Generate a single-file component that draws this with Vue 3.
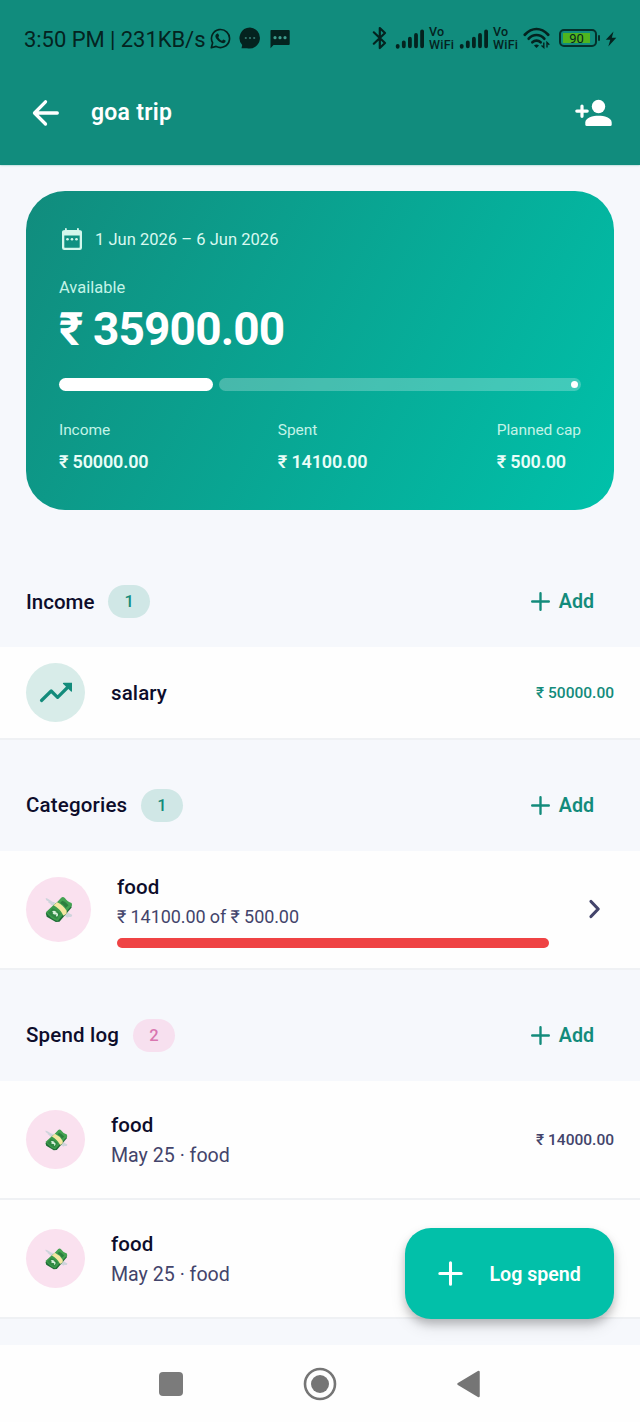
<script setup>
const stats = [
  { label: 'Income', value: '₹ 50000.00' },
  { label: 'Spent', value: '₹ 14100.00' },
  { label: 'Planned cap', value: '₹ 500.00' },
]
const spends = [
  { id: 1, name: 'food', meta: 'May 25 · food', amount: '₹ 14000.00' },
  { id: 2, name: 'food', meta: 'May 25 · food', amount: '' },
]
const spentPercent = 28.2
</script>

<template>
  <div class="screen">
    <svg class="defs" width="0" height="0" aria-hidden="true">
      <symbol id="money" viewBox="0 0 32 32">
        <path d="M12 9 C8 9 7 6 2 4.500 C1.500 7 4 8 5 8.200 C4 9 5.500 10.500 7 10.500 C7 12 9 13 11 12.500 Z" fill="#cfd4dc" />
        <path d="M21 18 C24 18 26 21 31 23 C31.500 25.500 29 26 27.500 25 C27 26.500 24.500 26 24 24.500 C22 25 20 23 19 21 Z" fill="#cfd4dc" />
        <path d="M2 21.500 L20 4.500 L30 12 L30.500 15 L17 30.500 L13 31 L3 25 Z" fill="#1d6b35" />
        <path d="M2 20 L13 10 L24 19.500 L15 30 Q7 27 2 20 Z" fill="#3b9a4b" />
        <path d="M13.500 10 L19 4 Q21 2.500 23 4.500 Q26 9 30.500 10 L31 12.500 L24 20 Z" fill="#43a252" />
        <path d="M20 7.500 Q23 8 27 12.500 L24 15.500 Q22 12 18 10 Z" fill="#2c7f3f" />
        <path d="M4.500 20.500 Q8 18 9 16 Q14 17 18.500 22 Q15 24 14.500 27.500 Q9 26 4.500 20.500 Z" fill="#2f8843" />
        <path d="M10.500 12.500 L14.500 9 Q21 12 25 18.500 L25 21.500 L21.500 24 Q18 16.500 10.500 12.500 Z" fill="#f5e6a1" />
        <path d="M9.500 20 Q11 18.800 12.500 20 L11 21.500 Q12.500 22 14 21.500 Q15.500 23 13.500 24.500" fill="none" stroke="#d9f2dc" stroke-width="1.700" />
      </symbol>
      <symbol id="plus" viewBox="0 0 24 24">
        <path d="M12 2.500 V21.500 M2.500 12 H21.500" fill="none" stroke="currentColor" stroke-width="2.700" stroke-linecap="round" />
      </symbol>
      <symbol id="bars" viewBox="0 0 30 20">
        <path d="M2.700 17.800 V16.800 M8.800 17.300 V13.300 M14.900 17.300 V9.700 M21 17.300 V6 M27.100 17.300 V2.300" fill="none" stroke="currentColor" stroke-width="3.800" stroke-linecap="round" />
      </symbol>
    </svg>

    <header class="top">
      <div class="status">
        <span class="clock">3:50 PM | 231KB/s</span>
        <svg class="s-wa" viewBox="0 0 24 24" width="21" height="21">
          <path d="M1.500 22.500 L3 17 A10.300 10.300 0 1 1 7 21 Z" fill="none" stroke="currentColor" stroke-width="1.900" stroke-linejoin="round" />
          <path d="M8.200 6.300 C9 6 9.400 6.300 9.700 7.200 L10.400 8.900 C10.500 9.300 9.600 10.200 9.500 10.500 C10.500 12.500 12 13.700 13.800 14.500 C14.200 14.200 15 13 15.400 13.100 L17.700 14.200 C18.100 14.500 17.700 16.200 16.700 16.900 C15.300 17.800 13.400 17.400 10.800 15.800 C8.700 14.400 7.200 12.500 6.400 10.700 C5.700 9 6.500 7 8.200 6.300 Z" fill="currentColor" />
        </svg>
        <svg class="s-chat" viewBox="0 0 22 22" width="22" height="22">
          <path d="M11 0.500 A10.500 10.500 0 1 1 8 21.200 H2.500 L3.200 18 A10.500 10.500 0 0 1 11 0.500 Z" fill="currentColor" />
          <g fill="#36796f"><circle cx="6.800" cy="11" r="1.100" /><circle cx="11" cy="11" r="1.100" /><circle cx="15.200" cy="11" r="1.100" /></g>
        </svg>
        <svg class="s-sms" viewBox="0 0 20 20" width="20" height="20">
          <path d="M1.200 1 H18.800 Q19.700 1 19.700 2 V15 Q19.700 16 18.700 16 H3.500 L0.500 19.300 V2 Q0.500 1 1.200 1 Z" fill="currentColor" />
          <g fill="#3f9c8d"><circle cx="5" cy="8.700" r="1.600" /><circle cx="10" cy="8.700" r="1.600" /><circle cx="15" cy="8.700" r="1.600" /></g>
        </svg>
        <span class="grow"></span>
        <svg class="s-bt" viewBox="0 0 16 24" width="16" height="24">
          <path d="M1.800 6.300 L13 17 L7.800 22 V2 L13 7 L1.800 17.700" fill="none" stroke="currentColor" stroke-width="2.200" stroke-linejoin="round" stroke-linecap="round" />
        </svg>
        <svg class="s-bars" width="30" height="20"><use href="#bars" /></svg>
        <span class="vo">Vo<br>WiFi</span>
        <svg class="s-bars second" width="30" height="20"><use href="#bars" /></svg>
        <span class="vo">Vo<br>WiFi</span>
        <svg class="s-wifi" viewBox="0 0 28 22" width="28" height="22">
          <g fill="none" stroke="currentColor" stroke-width="2.700" stroke-linecap="round">
            <path d="M1.800 7.700 Q7.200 2 13.500 2 T25.200 7.700" />
            <path d="M5.700 11.700 Q9 8 13.500 8 T21.300 11.700" />
            <path d="M9.400 15.300 Q11.200 13.600 13.500 13.600 T17.600 15.300" />
          </g>
          <path d="M11 18.600 Q13.500 16.600 16 18.600 L13.500 21 Z" fill="currentColor" />
          <path d="M20.800 15.500 V20.500 L18.500 18.500 M24 20.500 V15.500 L26.300 17.700" fill="none" stroke="currentColor" stroke-width="1.400" />
        </svg>
        <span class="battery"><span class="charge">90</span></span>
        <span class="nub"></span>
        <svg class="s-bolt" viewBox="0 0 12 16" width="12" height="16"><path d="M8.500 0.500 L0.800 8.800 H5.300 L3.300 15.500 L11.300 6.700 H6.800 Z" fill="currentColor" /></svg>
      </div>
      <div class="bar">
        <svg class="back" viewBox="0 0 28 28" width="28" height="28">
          <path d="M13.500 2.800 L2.500 14 L13.500 25 M3 14 H25.300" fill="none" stroke="#fff" stroke-width="3.300" stroke-linecap="round" stroke-linejoin="round" />
        </svg>
        <h1>goa trip</h1>
        <span class="grow"></span>
        <svg class="person" viewBox="0 0 38 28" width="38" height="28">
          <circle cx="23.500" cy="7.500" r="6.700" fill="#fff" />
          <path d="M10.300 25.500 V23.500 C10.300 18.700 18 16.800 23.500 16.800 S36.700 18.700 36.700 23.500 V25.500 Q36.700 27 35.200 27 H11.800 Q10.300 27 10.300 25.500 Z" fill="#fff" />
          <path d="M7 7 V17.300 M1.800 12.100 H12.200" fill="none" stroke="#fff" stroke-width="3.200" stroke-linecap="round" />
        </svg>
      </div>
    </header>

    <main>
      <section class="card">
        <div class="dates">
          <svg viewBox="0 0 22 24" width="22" height="24">
            <path fill-rule="evenodd" d="M4 3 V1.500 Q4 1 4.800 1 T5.800 1.500 V3 H16 V1.500 Q16 1 16.900 1 T17.900 1.500 V3 Q21 3 21 5 V20.800 Q21 23 18.800 23 H3.200 Q1 23 1 20.800 V5 Q1 3 4 3 Z M3.300 8.600 V19.900 Q3.300 20.800 4.200 20.800 H17.800 Q18.700 20.800 18.700 19.900 V8.600 Z" fill="#d3f7ec" />
            <g fill="#d3f7ec"><circle cx="6.500" cy="12.200" r="1.300" /><circle cx="11" cy="12.200" r="1.300" /><circle cx="15.500" cy="12.200" r="1.300" /></g>
          </svg>
          <span>1 Jun 2026 – 6 Jun 2026</span>
        </div>
        <div class="available">Available</div>
        <div class="total">₹ 35900.00</div>
        <div class="progress">
          <span class="done" :style="{ width: `calc(${spentPercent}% + 6.5px)` }"></span>
          <span class="rest"><i></i></span>
        </div>
        <div class="stats">
          <div v-for="s in stats" :key="s.label">
            <div class="stat-label">{{ s.label }}</div>
            <div class="stat-value">{{ s.value }}</div>
          </div>
        </div>
      </section>

      <div class="section first">
        <h2 class="t-income">Income</h2><span class="badge">1</span><span class="grow"></span>
        <button><svg width="21" height="21"><use href="#plus" /></svg><span>Add</span></button>
      </div>
      <div class="row income">
        <span class="avatar mint">
          <svg viewBox="0 0 34 22" width="34" height="22">
            <path d="M2.500 18.500 L12.200 9 L18.600 15.300 L28.500 5.500" fill="none" stroke="#138b7b" stroke-width="3.200" stroke-linecap="round" stroke-linejoin="round" />
            <path d="M24 1.700 Q23.500 0.700 24.800 0.700 H33 V9 Q33 10.200 32 9.500 Z" fill="#138b7b" />
          </svg>
        </span>
        <span class="name">salary</span>
        <span class="grow"></span>
        <span class="amount green">₹ 50000.00</span>
      </div>

      <div class="section">
        <h2>Categories</h2><span class="badge">1</span><span class="grow"></span>
        <button><svg width="21" height="21"><use href="#plus" /></svg><span>Add</span></button>
      </div>
      <div class="row category">
        <span class="avatar big"><svg width="29" height="29"><use href="#money" /></svg></span>
        <div class="text">
          <div class="name">food</div>
          <div class="limit">₹ 14100.00 of ₹ 500.00</div>
          <div class="over"></div>
        </div>
        <svg class="chevron" viewBox="0 0 14 20" width="14" height="20"><path d="M3 2.500 L10.200 10 L3 17.500" fill="none" stroke="#43446b" stroke-width="3.200" stroke-linecap="round" stroke-linejoin="round" /></svg>
      </div>

      <div class="section">
        <h2>Spend log</h2><span class="badge pink">2</span><span class="grow"></span>
        <button><svg width="21" height="21"><use href="#plus" /></svg><span>Add</span></button>
      </div>
      <div v-for="s in spends" :key="s.id" class="row spend">
        <span class="avatar"><svg width="24" height="24"><use href="#money" /></svg></span>
        <div class="text">
          <div class="name">{{ s.name }}</div>
          <div class="meta">{{ s.meta }}</div>
        </div>
        <span class="grow"></span>
        <span class="amount">{{ s.amount }}</span>
      </div>
    </main>

    <button class="fab"><svg width="27" height="27"><use href="#plus" /></svg><span>Log spend</span></button>

    <nav>
      <svg viewBox="0 0 36 36" width="36" height="36"><rect x="6" y="6" width="24" height="24" rx="4" fill="#7b7b7b" /></svg>
      <svg viewBox="0 0 36 36" width="36" height="36"><circle cx="18" cy="18" r="15" fill="none" stroke="#757575" stroke-width="2.600" /><circle cx="18" cy="18" r="9" fill="#757575" /></svg>
      <svg viewBox="0 0 36 36" width="36" height="36"><path d="M27.500 6 V30 L7.500 18 Z" fill="#757575" stroke="#757575" stroke-width="2.500" stroke-linejoin="round" /></svg>
    </nav>
  </div>
</template>

<style>
body { background: #f6f8fc; }
</style>

<style scoped>
.screen { position: relative; width: 640px; height: 1422px; overflow: hidden; display: flex; flex-direction: column; background: #f6f8fc; font-family: Roboto, "Noto Sans", sans-serif; color: #0d0d2b; }
.screen * { box-sizing: border-box; }
.defs { position: absolute; }
svg { display: block; flex: none; }
span, h1, h2 { white-space: nowrap; }
.grow { flex: 1; }
button { border: 0; padding: 0; background: none; font-family: inherit; display: flex; align-items: center; }
.top { height: 164.500px; flex: none; background: #118c7d; box-shadow: 0 0 2px #118c7d88; }
.status { height: 77px; padding: 0 24px; display: flex; align-items: center; color: #04231f; }
.clock { font-size: 22px; line-height: 30px; width: 182px; margin-top: 2px; letter-spacing: -0.050px; }
.s-wa { margin-left: 4px; margin-top: -1px; }
.s-chat { margin-left: 8px; margin-top: -1px; }
.s-sms { margin-left: 9px; margin-top: 1px; }
.s-bt { margin-right: 7px; margin-top: -1px; }
.vo { width: 26px; margin-left: 4px; font-size: 12.500px; line-height: 12.300px; font-weight: 500; letter-spacing: 0.250px; }
.second { margin-left: 4px; }
.s-wifi { margin-left: 4px; margin-top: -1px; }
.battery { width: 38px; height: 18px; margin-left: 8px; margin-top: -1px; border: 2px solid #04302b; border-radius: 5px; padding: 2px 5px 2px 2px; display: flex; }
.charge { flex: 1; background: #4fb51f; font-size: 13px; line-height: 11px; text-align: center; }
.nub { width: 2px; height: 6px; margin-left: 1px; margin-top: -1px; background: #04302b; border-radius: 1px; }
.s-bolt { margin-left: 5px; margin-right: -1px; }
.bar { height: 71px; padding: 0 27px 0 32px; display: flex; align-items: center; }
h1 { margin: 0 0 0 31px; font-size: 23px; line-height: 30px; font-weight: 600; letter-spacing: 0.250px; color: #fff; }
main { display: flex; flex-direction: column; }
.card { height: 319px; margin: 26.500px 26px 0; padding: 36px 33px 0; border-radius: 39px; background: linear-gradient(118.500deg, #118c7d, #00c1aa); color: #fff; }
.dates { display: flex; align-items: center; height: 24px; gap: 12.500px; padding-left: 1.500px; font-size: 16.500px; letter-spacing: 0.030px; color: #d9f9f0; }
.available { margin-top: 27px; font-size: 16.500px; line-height: 20px; color: #c3f3e7; }
.total { margin-top: 3px; font-size: 46px; line-height: 56px; font-weight: 700; letter-spacing: -0.840px; }
.progress { display: flex; gap: 6.500px; height: 13px; margin-top: 21px; }
.done { flex: none; background: #fff; border-radius: 7px; }
.rest { flex: 1; display: flex; justify-content: flex-end; align-items: center; padding-right: 3px; border-radius: 7px; background: rgba(255, 255, 255, 0.250); }
.rest i { width: 7px; height: 7px; border-radius: 50%; background: #fff; }
.stats { display: flex; justify-content: space-between; margin-top: 28.500px; }
.stat-label { font-size: 15.500px; line-height: 20px; letter-spacing: -0.080px; color: #c3f3e7; }
.stat-value { margin-top: 11.500px; font-size: 18px; line-height: 22px; font-weight: 600; letter-spacing: -0.160px; color: #e9fdf8; }
.section { height: 110.500px; flex: none; padding: 20px 46px 0 26px; display: flex; align-items: center; }
.section.first { height: 137px; padding-top: 46px; }
h2 { margin: 0; font-size: 20.500px; line-height: 28px; font-weight: 500; letter-spacing: 0.180px; }
.t-income { letter-spacing: 0; }
.badge { width: 42.500px; height: 33px; margin-left: 13.500px; border-radius: 16.500px; background: #d0e7e6; color: #138b7b; font-size: 16.500px; line-height: 33px; font-weight: 500; text-align: center; }
.badge.pink { background: #f7e0ef; color: #d976b0; }
.section button { gap: 8px; color: #138b7b; font-size: 19.600px; line-height: 28px; font-weight: 600; }
.section button span { margin-top: 1px; }
.section button svg { margin-top: -0.500px; }
.row { flex: none; display: flex; align-items: center; padding: 0 26px; background: #fefefe; border-bottom: 2px solid #eff1f4; }
.income { height: 93px; }
.category { height: 119.500px; }
.spend { height: 119px; }
.avatar { flex: none; width: 59px; height: 59px; border-radius: 50%; display: flex; align-items: center; justify-content: center; background: #fae1ef; }
.avatar.mint { background: #d8ece9; }
.avatar.big { width: 65px; height: 65px; }
.avatar.big svg { margin-top: -1px; }
.name { font-size: 20.500px; line-height: 28px; font-weight: 500; letter-spacing: 0.100px; }
.income .name, .spend .text { margin-left: 26px; }
.spend .text { padding-top: 4px; }
.category .text { margin-left: 26px; width: 432px; padding-top: 2px; }
.limit { font-size: 18px; line-height: 30px; margin-top: 1px; letter-spacing: -0.090px; color: #43446b; }
.over { height: 10px; margin-top: 6px; border-radius: 5px; background: #ef4344; }
.chevron { margin-left: 38.500px; }
.meta { margin-top: 2px; font-size: 19.600px; line-height: 30px; color: #43446b; }
.amount { font-size: 15.500px; font-weight: 500; color: #43446b; }
.spend .amount { margin-top: 1px; }
.amount.green { color: #138b7b; }
.fab { position: absolute; left: 404.500px; top: 1227.500px; width: 209.500px; height: 91px; padding-left: 32px; gap: 26px; border-radius: 26px; background: #02c0a9; color: #fff; font-size: 19.600px; font-weight: 600; box-shadow: 0 5px 9px rgba(0, 0, 0, 0.200), 0 8px 16px rgba(0, 0, 0, 0.100); }
.fab span { margin-top: 2px; }
nav { margin-top: auto; height: 77px; flex: none; display: flex; align-items: center; justify-content: center; gap: 113px; background: #fefefe; }
</style>
